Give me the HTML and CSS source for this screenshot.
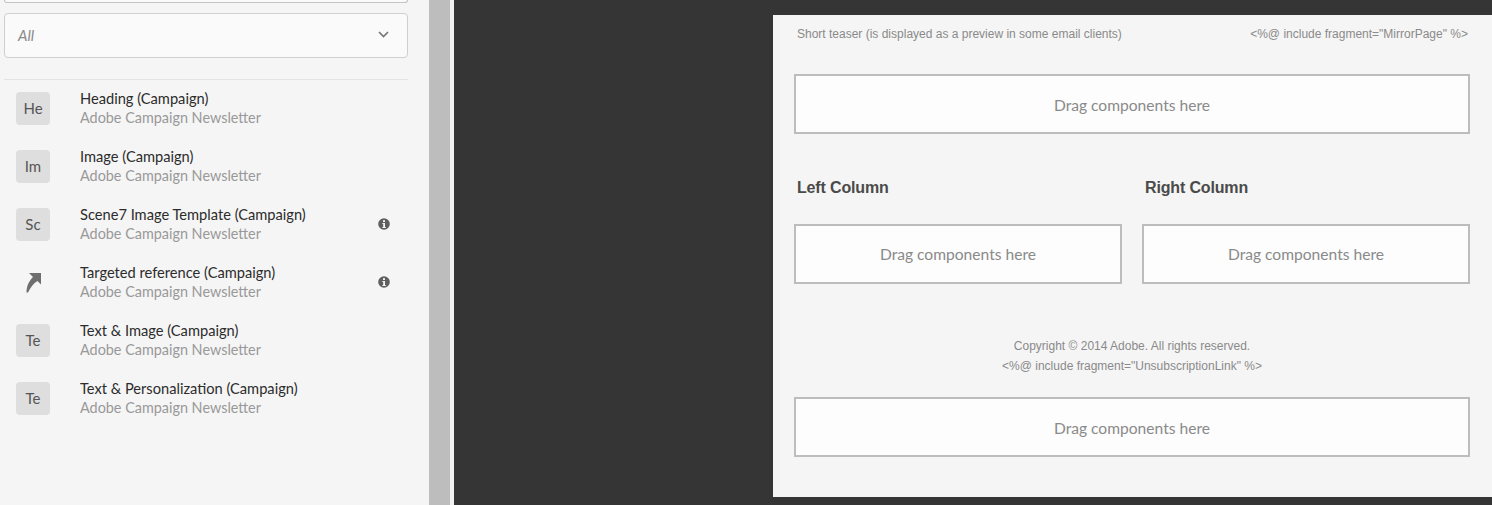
FILE: index.html
```html
<!DOCTYPE html>
<html lang="en">
<head>
  <meta charset="UTF-8">
  <link rel="stylesheet" href="styles.css">
  <title>Email editor</title>
</head>
<body>
  <div class="page">
    <div class="sidebar">
      <div class="searchBox"></div>
      <div class="groupSelect">
        <span>All</span>
        <svg class="chevron" width="11" height="7" viewBox="0 0 11 7"><path d="M1 1l4.5 4.5L10 1" fill="none" stroke="#777" stroke-width="1.7"/></svg>
      </div>
      <div class="componentList">
        <div class="item">
          <div class="badge">He</div>
          <div class="itemText"><div class="itemName">Heading (Campaign)</div><div class="itemGroup">Adobe Campaign Newsletter</div></div>
        </div>
        <div class="item">
          <div class="badge">Im</div>
          <div class="itemText"><div class="itemName">Image (Campaign)</div><div class="itemGroup">Adobe Campaign Newsletter</div></div>
        </div>
        <div class="item">
          <div class="badge">Sc</div>
          <div class="itemText"><div class="itemName">Scene7 Image Template (Campaign)</div><div class="itemGroup">Adobe Campaign Newsletter</div></div>
          <svg class="info" width="12" height="12" viewBox="0 0 12 12"><circle cx="6" cy="6" r="5.8" fill="#5f5f5f"/><rect x="5" y="2.2" width="2" height="1.8" fill="#f5f5f5"/><path d="M4.4 5h2.6v3.9h.8v1H4.4v-1h.8V6h-.8z" fill="#f5f5f5"/></svg>
        </div>
        <div class="item">
          <div class="iconSlot">
            <svg width="16" height="21" viewBox="0 0 16 21"><path d="M4 1H16V12.500L12.500 9C9 11 5.500 15 3 20.500H1.500C1.500 14 4 9 8 5Z" fill="#6e6e6e"/></svg>
          </div>
          <div class="itemText"><div class="itemName">Targeted reference (Campaign)</div><div class="itemGroup">Adobe Campaign Newsletter</div></div>
          <svg class="info" width="12" height="12" viewBox="0 0 12 12"><circle cx="6" cy="6" r="5.8" fill="#5f5f5f"/><rect x="5" y="2.2" width="2" height="1.8" fill="#f5f5f5"/><path d="M4.4 5h2.6v3.9h.8v1H4.4v-1h.8V6h-.8z" fill="#f5f5f5"/></svg>
        </div>
        <div class="item">
          <div class="badge">Te</div>
          <div class="itemText"><div class="itemName">Text &amp; Image (Campaign)</div><div class="itemGroup">Adobe Campaign Newsletter</div></div>
        </div>
        <div class="item">
          <div class="badge">Te</div>
          <div class="itemText"><div class="itemName">Text &amp; Personalization (Campaign)</div><div class="itemGroup">Adobe Campaign Newsletter</div></div>
        </div>
      </div>
    </div>
    <div class="scrollbar"></div>
    <div class="workspace">
      <div class="canvas">
        <div class="teaser">
          <span>Short teaser (is displayed as a preview in some email clients)</span>
          <span>&lt;%@ include fragment="MirrorPage" %&gt;</span>
        </div>
        <div class="dropzone">Drag components here</div>
        <div class="columns">
          <div class="column">
            <h3>Left Column</h3>
            <div class="dropzone">Drag components here</div>
          </div>
          <div class="column">
            <h3>Right Column</h3>
            <div class="dropzone">Drag components here</div>
          </div>
        </div>
        <div class="copyright">
          <div>Copyright © 2014 Adobe. All rights reserved.</div>
          <div>&lt;%@ include fragment="UnsubscriptionLink" %&gt;</div>
        </div>
        <div class="dropzone">Drag components here</div>
      </div>
    </div>
  </div>
</body>
</html>
```

FILE: styles.css
```css
html, body {
  margin: 0;
  height: 505px;
  overflow: hidden;
  background-color: #353535;
}
.page {
  display: flex;
  height: 505px;
}
.sidebar {
  width: 429px;
  flex-shrink: 0;
  box-sizing: border-box;
  padding-left: 4px;
  padding-right: 21px;
  background-color: #f5f5f5;
  font-family: "Lato", sans-serif;
}
.searchBox {
  height: 3px;
  box-sizing: border-box;
  border: 1px solid #c4c4c4;
  border-top: none;
  background-color: #fafafa;
  border-radius: 0 0 3px 3px;
}
.groupSelect {
  display: flex;
  align-items: center;
  justify-content: space-between;
  height: 45px;
  box-sizing: border-box;
  margin-top: 10px;
  padding: 0 18px 2px 13px;
  border: 1px solid #cfcfcf;
  border-radius: 4px;
  background-color: #fafafa;
  font-size: 15px;
  font-style: italic;
  color: #8a8a8a;
}
.componentList {
  margin-top: 21px;
  border-top: 1px solid #e4e4e4;
}
.item {
  display: flex;
  align-items: center;
  height: 58px;
  box-sizing: border-box;
  padding-left: 12px;
  padding-bottom: 2px;
}
.badge, .iconSlot {
  width: 34px;
  height: 33px;
  flex-shrink: 0;
  display: flex;
  align-items: center;
  justify-content: center;
  margin-right: 30px;
}
.badge {
  border-radius: 4px;
  background-color: #dedede;
  font-size: 15px;
  color: #555555;
}
.itemText {
  flex: 1;
  line-height: 19px;
}
.itemName {
  font-size: 14.650px;
  color: #2c2c2c;
}
.itemGroup {
  font-size: 14.400px;
  color: #999999;
}
.info {
  margin-right: 18px;
}
.scrollbar {
  width: 21px;
  flex-shrink: 0;
  background-color: #bdbdbd;
}
.workspace {
  flex: 1;
  margin-left: 4px;
  padding: 15px 0 8px 319px;
  box-shadow: -4px 0 0 #f2f2f2;
}
.canvas {
  height: 482px;
  box-sizing: border-box;
  padding: 0 22px 0 21px;
  background-color: #f5f5f5;
  font-family: "Liberation Sans", sans-serif;
}
.teaser {
  display: flex;
  justify-content: space-between;
  align-items: center;
  height: 37px;
  margin-bottom: 22px;
  padding: 0 2px 0 3px;
  font-size: 12px;
  color: #8a8a8a;
}
.dropzone {
  height: 60px;
  box-sizing: border-box;
  display: flex;
  align-items: center;
  justify-content: center;
  padding-top: 1px;
  border: 2px solid #bdbdbd;
  background-color: #fdfdfd;
  font-family: "Lato", sans-serif;
  font-size: 15.600px;
  color: #8a8a8a;
}
.columns {
  display: flex;
  gap: 20px;
}
.column {
  flex: 1;
}
.column .dropzone {
  padding-top: 0;
}
.column h3 {
  margin: 0;
  height: 90px;
  box-sizing: border-box;
  padding: 44px 0 0 3px;
  font-size: 16px;
  letter-spacing: -0.150px;
  line-height: 20px;
  color: #4a4a4a;
}
.copyright {
  padding: 52px 0 21px;
  text-align: center;
  font-size: 12px;
  line-height: 20px;
  color: #8a8a8a;
}
```
